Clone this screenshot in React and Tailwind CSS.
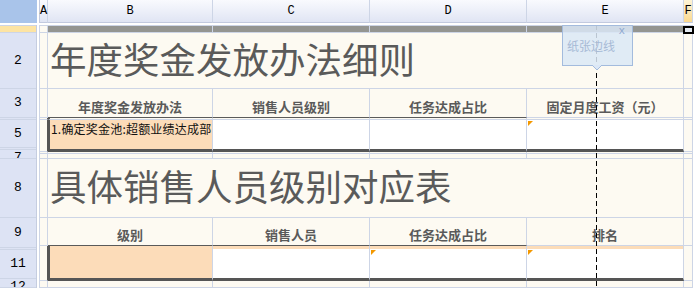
import React from 'react';

const R = 'border-r border-r-[#cdd5e6]';
const B = 'border-b border-b-[#cdd5e6]';
const T = 'border-t border-t-[#cdd5e6]';
const BD = 'border-b border-b-[#5a5a5a]';
const B3 = 'border-b-[3px] border-b-[#555555]';
const RD = 'border-r border-r-[#555555]';
const LD = 'border-l-2 border-l-[#555555]';
const CJK = "font-['Noto_Sans_CJK_SC',sans-serif]";
const MONO = "font-['Liberation_Mono',monospace]";

function Tri() {
  return (
    <div className="absolute left-[1px] top-[1px] h-0 w-0 border-t-[5px] border-r-[5px] border-t-[#f39800] border-r-transparent" />
  );
}

function Head({ children }) {
  return (
    <div className={`${R} ${BD} flex items-end justify-center pb-[2px] ${CJK} text-[13px] font-bold leading-[16px] text-[#5a5a5a]`}>
      {children}
    </div>
  );
}

function RowHead({ h, label, yellow, top, align = 'center' }) {
  return (
    <div
      className={`${h} ${B} ${top ? T : ''} ${yellow ? 'bg-[#fde4a3]' : ''} flex justify-center overflow-hidden ${align === 'center' ? 'items-center' : 'items-start pt-[1px]'} ${MONO} text-[13px] leading-[14px] text-black`}
    >
      {label}
    </div>
  );
}

export default function App() {
  const colHead = `${R} border-b border-b-[#c2cadf] flex items-center justify-center ${MONO} text-[12px] text-black`;
  return (
    <div className="relative h-[292px] w-[695px] overflow-hidden bg-white">
      {/* column headers */}
      <div className="flex h-[23px]">
        <div className="h-[23px] w-[37px] bg-[#a9c4ea]" />
        <div className="w-[2px]" />
        <div className="flex border-l border-l-[#c2cadf] bg-gradient-to-b from-[#f9fafe] to-[#dfe4f3]">
          <div className={`${colHead} w-[8px]`}>A</div>
          <div className={`${colHead} w-[165px]`}>B</div>
          <div className={`${colHead} w-[157px]`}>C</div>
          <div className={`${colHead} w-[157px]`}>D</div>
          <div className={`${colHead} w-[157px]`}>E</div>
          <div className={`${colHead} w-[9px] bg-gradient-to-b from-[#fef4d6] to-[#fbd98f]`}>F</div>
        </div>
      </div>
      <div className="h-[2px]" />

      <div className="flex">
        {/* row headers */}
        <div className="flex w-[37px] flex-col border-r border-r-[#c5cde0] bg-[#dde3f4]">
          <RowHead h="h-[8px]" yellow top />
          <RowHead h="h-[56px]" label="2" />
          <RowHead h="h-[29px]" label="3" />
          <RowHead h="h-[2px]" />
          <RowHead h="h-[28px]" label="5" />
          <RowHead h="h-[2px]" />
          <RowHead h="h-[9px]" label="7" align="top" />
          <RowHead h="h-[59px]" label="8" />
          <RowHead h="h-[30px]" label="9" />
          <RowHead h="h-[2px]" />
          <RowHead h="h-[29px]" label="11" />
          <RowHead h="h-[9px]" label="12" align="top" />
        </div>
        <div className="w-[2px]" />

        {/* sheet body */}
        <div className="grid grid-cols-[8px_165px_157px_157px_157px_9px] grid-rows-[8px_56px_29px_2px_32px_2px_5px_59px_28px_3px_32px_7px] border-l border-l-[#cdd5e6] bg-[#fdfaf2]">
          {/* row 1 */}
          <div className={`${T} ${R} ${B}`} />
          <div className={`${T} ${R} ${B} bg-[#949591]`} />
          <div className={`${T} ${R} ${B} bg-[#949591]`} />
          <div className={`${T} ${R} ${B} bg-[#949591]`} />
          <div className={`${T} ${R} ${B} bg-[#949591]`} />
          <div className={`${T} ${R} ${B}`} />

          {/* row 2 */}
          <div className={`${R} ${B}`} />
          <div className={`${R} ${B} col-span-4 flex items-center pb-[3px] pl-[2px] ${CJK} text-[36.5px] leading-[40px] text-[#5a5a5a] whitespace-nowrap`}>
            年度奖金发放办法细则
          </div>
          <div className={`${R} ${B}`} />

          {/* row 3 */}
          <div className={`${R} ${B}`} />
          <Head>年度奖金发放办法</Head>
          <Head>销售人员级别</Head>
          <Head>任务达成占比</Head>
          <div className={`${R} ${B} flex items-end justify-center pb-[2px] ${CJK} text-[13px] font-bold leading-[16px] text-[#5a5a5a]`}>
            固定月度工资（元）
          </div>
          <div className={`${R} ${B}`} />

          {/* row 4 (hidden) */}
          <div className={`${RD} ${B}`} />
          <div className={`${LD} ${R} ${B}`} />
          <div className={`${R} ${B}`} />
          <div className={`${R} ${B}`} />
          <div className={`${R} ${B}`} />
          <div className={`${R} ${B}`} />

          {/* row 5 */}
          <div className={`${RD} ${B}`} />
          <div className={`${LD} ${R} ${B3} overflow-hidden whitespace-nowrap bg-[#fcdcb9] pl-[1px] pt-[2px] ${CJK} text-[12px] tracking-[0.2px] leading-[14px] text-[#111111]`}>
            1.确定奖金池:超额业绩达成部
          </div>
          <div className={`${R} ${B3} bg-white`} />
          <div className={`${R} ${B3} bg-white`} />
          <div className={`${R} ${B3} relative bg-white`}>
            <Tri />
          </div>
          <div className={`${R} ${B}`} />

          {/* row 6 (hidden) */}
          <div className={`${R} ${B}`} />
          <div className={`${R} ${B}`} />
          <div className={`${R} ${B}`} />
          <div className={`${R} ${B}`} />
          <div className={`${R} ${B}`} />
          <div className={`${R} ${B}`} />

          {/* row 7 */}
          <div className={`${R} ${B}`} />
          <div className={`${R} ${B}`} />
          <div className={`${R} ${B}`} />
          <div className={`${R} ${B}`} />
          <div className={`${R} ${B}`} />
          <div className={`${R} ${B}`} />

          {/* row 8 */}
          <div className={`${R} ${B}`} />
          <div className={`${R} ${B} col-span-4 flex items-center pb-[5px] pl-[2px] ${CJK} text-[36.5px] leading-[40px] text-[#5a5a5a] whitespace-nowrap`}>
            具体销售人员级别对应表
          </div>
          <div className={`${R} ${B}`} />

          {/* row 9 */}
          <div className={`${R} ${B}`} />
          <Head>级别</Head>
          <Head>销售人员</Head>
          <Head>任务达成占比</Head>
          <div className={`${R} ${B} flex items-end justify-center pb-[2px] ${CJK} text-[13px] font-bold leading-[16px] text-[#5a5a5a]`}>
            排名
          </div>
          <div className={`${R} ${B}`} />

          {/* row 10 (hidden) */}
          <div className={`${RD}`} />
          <div className={`${LD} ${R} bg-[#fcdcb9]`} />
          <div className={`${R} bg-[#fcdcb9]`} />
          <div className={`${R} bg-[#fcdcb9]`} />
          <div className={`${R} bg-[#fcdcb9]`} />
          <div className={`${R}`} />

          {/* row 11 */}
          <div className={`${RD} ${B}`} />
          <div className={`${LD} ${R} ${B3} bg-[#fcdcb9]`} />
          <div className={`${R} ${B3} bg-white`} />
          <div className={`${R} ${B3} relative bg-white`}>
            <Tri />
          </div>
          <div className={`${R} ${B3} relative bg-white`}>
            <Tri />
          </div>
          <div className={`${R} ${B}`} />

          {/* row 12 */}
          <div className={`${R} ${B}`} />
          <div className={`${R} ${B}`} />
          <div className={`${R} ${B}`} />
          <div className={`${R} ${B}`} />
          <div className={`${R} ${B}`} />
          <div className={`${R} ${B}`} />
        </div>
      </div>

      {/* selected cell marker F1 */}
      <div className="absolute left-[683px] top-[26px] h-[8px] w-[11px] border-2 border-black bg-[#e3e9f1]" />

      {/* page boundary dashed line */}
      <svg className="absolute left-[596px] top-[25px]" width="1" height="263">
        <line x1="0.5" y1="0" x2="0.5" y2="263" stroke="#000" strokeDasharray="5 3" />
      </svg>

      {/* tooltip */}
      <div className="absolute left-[562px] top-[25px] h-[41px] w-[71px] border border-[#a3bbdd] bg-[#dbe7f6]/85">
        <div className={`pl-[4px] pt-[12px] ${CJK} text-[12px] leading-[16px] text-[#a7bad6]`}>纸张边线</div>
        <div className={`absolute right-[7px] top-[-1px] ${MONO} text-[11px] leading-[12px] text-[#8ea8d0]`}>x</div>
      </div>
      <svg className="absolute left-[592px] top-[65px]" width="10" height="6">
        <polygon points="0,0 10,0 5,5" fill="#dbe7f6" />
        <polyline points="0,0 5,5 10,0" fill="none" stroke="#a3bbdd" strokeWidth="1" />
      </svg>
    </div>
  );
}
